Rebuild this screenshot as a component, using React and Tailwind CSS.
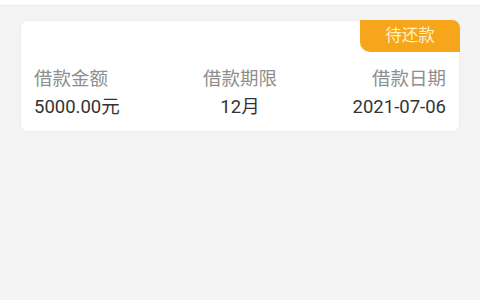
export default function App() {
  const items = [
    { label: '借款金额', value: '5000.00元', align: 'text-left' },
    { label: '借款期限', value: '12月', align: 'text-center' },
    { label: '借款日期', value: '2021-07-06', align: 'text-right' },
  ]

  return (
    <div
      className="w-[480px] h-[300px] bg-[#f4f4f4] overflow-hidden"
      style={{ fontFamily: 'Roboto, "Noto Sans CJK SC", sans-serif' }}
    >
      <div className="h-[6px] bg-white border-b border-[#ececec]" />
      <div className="mx-[21px] mt-[15px] bg-white rounded-[6px] shadow-[0_0_3px_rgba(0,0,0,0.06)] pb-[12px]">
        <div className="flex justify-end">
          <div className="w-[100px] h-[32px] -mt-[1px] -mr-[1px] bg-[#f7a51b] rounded-tr-[8px] rounded-bl-[10px] flex items-center justify-center text-[16.5px] text-[#fff2c2]">
            待还款
          </div>
        </div>
        <div className="grid grid-cols-3 px-[13px] mt-[15px]">
          {items.map((it) => (
            <div key={it.label} className={it.align}>
              <div className="text-[18.5px] leading-[24px] text-[#8e8e8e]">{it.label}</div>
              <div className="text-[18.5px] leading-[24px] mt-[4px] text-[#333333]">{it.value}</div>
            </div>
          ))}
        </div>
      </div>
    </div>
  )
}
